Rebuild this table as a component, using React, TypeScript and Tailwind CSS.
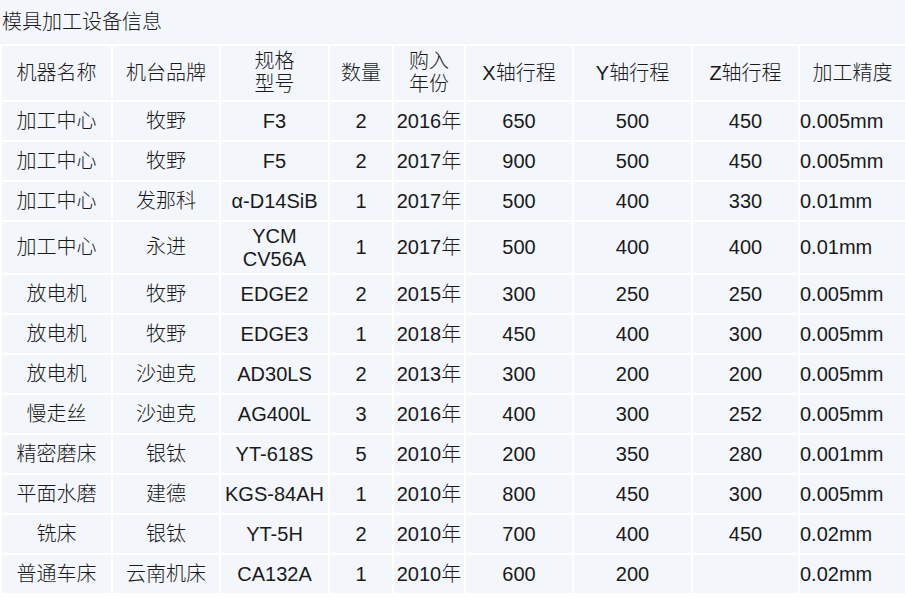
import React from "react";

const rows: (string | string[])[][] = [
  ["加工中心", "牧野", "F3", "2", "2016年", "650", "500", "450", "0.005mm"],
  ["加工中心", "牧野", "F5", "2", "2017年", "900", "500", "450", "0.005mm"],
  ["加工中心", "发那科", "α-D14SiB", "1", "2017年", "500", "400", "330", "0.01mm"],
  ["加工中心", "永进", ["YCM", "CV56A"], "1", "2017年", "500", "400", "400", "0.01mm"],
  ["放电机", "牧野", "EDGE2", "2", "2015年", "300", "250", "250", "0.005mm"],
  ["放电机", "牧野", "EDGE3", "1", "2018年", "450", "400", "300", "0.005mm"],
  ["放电机", "沙迪克", "AD30LS", "2", "2013年", "300", "200", "200", "0.005mm"],
  ["慢走丝", "沙迪克", "AG400L", "3", "2016年", "400", "300", "252", "0.005mm"],
  ["精密磨床", "银钛", "YT-618S", "5", "2010年", "200", "350", "280", "0.001mm"],
  ["平面水磨", "建德", "KGS-84AH", "1", "2010年", "800", "450", "300", "0.005mm"],
  ["铣床", "银钛", "YT-5H", "2", "2010年", "700", "400", "450", "0.02mm"],
  ["普通车床", "云南机床", "CA132A", "1", "2010年", "600", "200", "", "0.02mm"],
];

const widths = [111, 108, 109, 64, 72, 108, 119, 107, 107];

const header: (string | string[])[] = [
  "机器名称",
  "机台品牌",
  ["规格", "型号"],
  "数量",
  ["购入", "年份"],
  "X轴行程",
  "Y轴行程",
  "Z轴行程",
  "加工精度",
];

function Cell({ v }: { v: string | string[] }) {
  if (Array.isArray(v)) {
    return (
      <div className="flex flex-col items-center leading-[23px]">
        {v.map((s) => (
          <span key={s}>{s}</span>
        ))}
      </div>
    );
  }
  return <>{v}</>;
}

export default function App() {
  return (
    <div
      className="w-[905px] h-[597px] bg-white text-[20px] text-[#1a1a1a]"
      style={{ fontFamily: '"Liberation Sans", "Noto Sans CJK SC", sans-serif' }}
    >
      <div className="h-[44px] bg-[#f3f6fa] flex items-center pl-[2px] font-light">
        模具加工设备信息
      </div>
      <table className="table-fixed border-collapse w-[905px]">
        <colgroup>
          {widths.map((w, i) => (
            <col key={i} style={{ width: w }} />
          ))}
        </colgroup>
        <thead>
          <tr className="h-[56px]">
            {header.map((h, i) => (
              <th
                key={i}
                className="bg-[#f3f6fa] border-2 border-white font-light text-center p-0 leading-[23px]"
              >
                <Cell v={h} />
              </th>
            ))}
          </tr>
        </thead>
        <tbody>
          {rows.map((r, ri) => (
            <tr key={ri} className={ri === 3 ? "h-[53px]" : "h-[40px]"}>
              {r.map((c, ci) => (
                <td
                  key={ci}
                  className={
                    "bg-[#f3f6fa] border-2 border-white p-0 font-light leading-[23px] " +
                    (ci === 8 ? "text-left" : "text-center")
                  }
                >
                  <Cell v={c} />
                </td>
              ))}
            </tr>
          ))}
        </tbody>
      </table>
    </div>
  );
}
